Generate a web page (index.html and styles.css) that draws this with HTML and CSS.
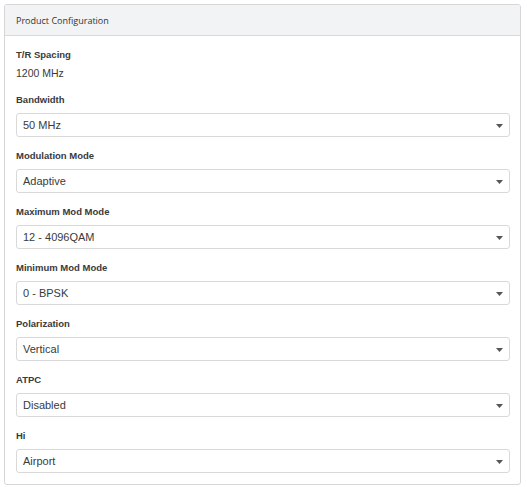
FILE: index.html
```html
<!DOCTYPE html>
<html>
<head>
<meta charset="utf-8">
<link rel="stylesheet" href="styles.css">
</head>
<body>
<div class="card">
  <div class="card-header">Product Configuration</div>
  <div class="card-body">
    <div class="group static">
      <div class="label">T/R Spacing</div>
      <div class="value">1200 MHz</div>
    </div>
    <div class="group">
      <div class="label">Bandwidth</div>
      <div class="select"><span>50 MHz</span><svg class="caret" width="7" height="4" viewBox="0 0 7 4"><path d="M0 0H7L3.5 4Z"/></svg></div>
    </div>
    <div class="group">
      <div class="label">Modulation Mode</div>
      <div class="select"><span>Adaptive</span><svg class="caret" width="7" height="4" viewBox="0 0 7 4"><path d="M0 0H7L3.5 4Z"/></svg></div>
    </div>
    <div class="group">
      <div class="label">Maximum Mod Mode</div>
      <div class="select"><span>12 - 4096QAM</span><svg class="caret" width="7" height="4" viewBox="0 0 7 4"><path d="M0 0H7L3.5 4Z"/></svg></div>
    </div>
    <div class="group">
      <div class="label">Minimum Mod Mode</div>
      <div class="select"><span>0 - BPSK</span><svg class="caret" width="7" height="4" viewBox="0 0 7 4"><path d="M0 0H7L3.5 4Z"/></svg></div>
    </div>
    <div class="group">
      <div class="label">Polarization</div>
      <div class="select"><span>Vertical</span><svg class="caret" width="7" height="4" viewBox="0 0 7 4"><path d="M0 0H7L3.5 4Z"/></svg></div>
    </div>
    <div class="group">
      <div class="label">ATPC</div>
      <div class="select"><span>Disabled</span><svg class="caret" width="7" height="4" viewBox="0 0 7 4"><path d="M0 0H7L3.5 4Z"/></svg></div>
    </div>
    <div class="group">
      <div class="label">Hi</div>
      <div class="select"><span>Airport</span><svg class="caret" width="7" height="4" viewBox="0 0 7 4"><path d="M0 0H7L3.5 4Z"/></svg></div>
    </div>
  </div>
</div>
</body>
</html>
```
FILE: styles.css
```css
html, body {
  margin: 0;
  padding: 0;
  background: #fff;
}
body {
  padding: 4px 7px 0 4px;
  font-family: "Liberation Sans", Arial, sans-serif;
  color: #333;
}
.card {
  width: 515px;
  border: 1px solid #d6d6d6;
  border-radius: 3px;
  overflow: hidden;
}
.card-header {
  height: 31px;
  box-sizing: border-box;
  background: #f2f3f4;
  border-bottom: 1px solid #d9d9d9;
  padding: 0 11px;
  display: flex;
  align-items: center;
  font-family: "Open Sans", "Liberation Sans", sans-serif;
  font-size: 9px;
  color: #333;
}
.card-body {
  padding: 12px 10px 11px 11px;
  display: flex;
  flex-direction: column;
}
.group {
  display: flex;
  flex-direction: column;
  gap: 6px;
  margin-bottom: 12px;
}
.group.static {
  gap: 4px;
  margin-bottom: 13px;
}
.group:last-child {
  margin-bottom: 0;
}
.label {
  font-size: 9.5px;
  font-weight: bold;
  line-height: 14px;
  color: #3a3a3a;
}
.value {
  font-size: 10.5px;
  line-height: 14px;
  color: #3a3a3a;
}
.select {
  height: 24px;
  box-sizing: border-box;
  border: 1px solid #d9d9d9;
  border-radius: 3px;
  padding: 0 6px 0 6px;
  display: flex;
  align-items: center;
  justify-content: space-between;
  font-size: 11px;
  color: #3a3a3a;
}
.caret {
  fill: #555;
  margin-top: 1px;
}
```
